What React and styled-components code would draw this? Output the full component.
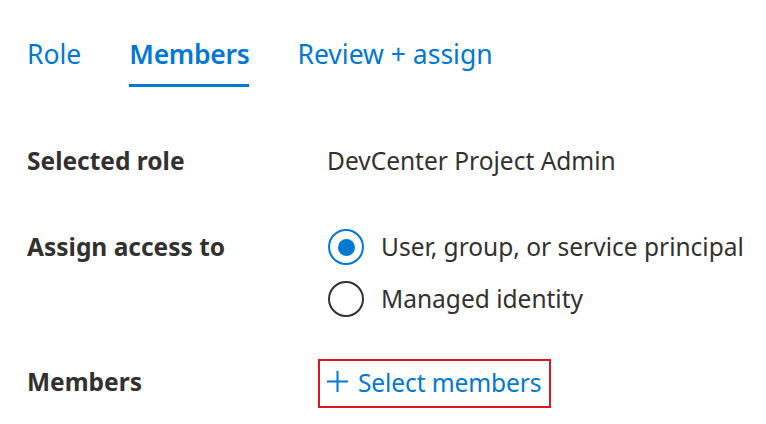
import React from "react";
import styled, { createGlobalStyle } from "styled-components";

const GlobalStyle = createGlobalStyle`
  body {
    margin: 0;
    background: #ffffff;
    font-family: "Noto Sans", "Open Sans", sans-serif;
    color: #323130;
  }
`;

const Page = styled.div`
  width: 766px;
  height: 424px;
  overflow: hidden;
  background: #ffffff;
`;

const TabBar = styled.div`
  display: flex;
  gap: 48px;
  padding: 37px 0 0 27px;
`;

const Tab = styled.div`
  font-size: 26.5px;
  line-height: 34px;
  color: #0078d4;
  font-weight: ${({ active }) => (active ? 600 : 400)};
  letter-spacing: ${({ active }) => (active ? "-0.3px" : "0")};
  padding-bottom: 13px;
  border-bottom: 3px solid ${({ active }) => (active ? "#0078d4" : "transparent")};
`;

const Form = styled.div`
  display: flex;
  flex-direction: column;
  padding-left: 27px;
  margin-top: 56px;
`;

const Row = styled.div`
  display: grid;
  grid-template-columns: 300px 1fr;
  align-items: start;
  margin-top: ${({ gap }) => gap || 0}px;
`;

const Label = styled.div`
  font-size: 24.5px;
  line-height: 36px;
  font-weight: 700;
  color: #323130;
`;

const Value = styled.div`
  font-size: 24.5px;
  line-height: 36px;
  color: #323130;
`;

const RadioGroup = styled.div`
  display: flex;
  flex-direction: column;
  gap: 16px;
`;

const RadioRow = styled.div`
  display: flex;
  align-items: center;
  gap: 17px;
  font-size: 24.5px;
  line-height: 36px;
  color: #323130;
`;

const RadioCircle = styled.span`
  box-sizing: border-box;
  width: 36px;
  height: 36px;
  margin-left: 1px;
  border-radius: 50%;
  border: 2px solid ${({ checked }) => (checked ? "#0078d4" : "#323130")};
  display: flex;
  align-items: center;
  justify-content: center;
  &::after {
    content: "";
    width: 17px;
    height: 17px;
    border-radius: 50%;
    background: ${({ checked }) => (checked ? "#0078d4" : "transparent")};
  }
`;

const Highlight = styled.div`
  justify-self: start;
  margin-left: -9px;
  margin-top: -5px;
  border: 2px solid #d9181f;
  padding: 4px 8px 5px 7px;
`;

const AddLink = styled.div`
  display: flex;
  align-items: center;
  gap: 10px;
  font-size: 24.5px;
  line-height: 36px;
  letter-spacing: -0.1px;
  color: #0078d4;
`;

const PlusIcon = () => (
  <svg width="21" height="21" viewBox="0 0 21 21" style={{ marginTop: -3 }}>
    <path d="M10.5 0v21M0 10.5h21" stroke="#0078d4" strokeWidth="2" fill="none" />
  </svg>
);

const Radio = ({ checked, children }) => (
  <RadioRow>
    <RadioCircle checked={checked} />
    {children}
  </RadioRow>
);

export default function App() {
  return (
    <Page>
      <GlobalStyle />
      <TabBar>
        <Tab>Role</Tab>
        <Tab active>Members</Tab>
        <Tab>Review + assign</Tab>
      </TabBar>
      <Form>
        <Row>
          <Label>Selected role</Label>
          <Value>DevCenter Project Admin</Value>
        </Row>
        <Row gap={50}>
          <Label>Assign access to</Label>
          <RadioGroup>
            <Radio checked>User, group, or service principal</Radio>
            <Radio>Managed identity</Radio>
          </RadioGroup>
        </Row>
        <Row gap={47}>
          <Label>Members</Label>
          <Highlight>
            <AddLink>
              <PlusIcon />
              Select members
            </AddLink>
          </Highlight>
        </Row>
      </Form>
    </Page>
  );
}
